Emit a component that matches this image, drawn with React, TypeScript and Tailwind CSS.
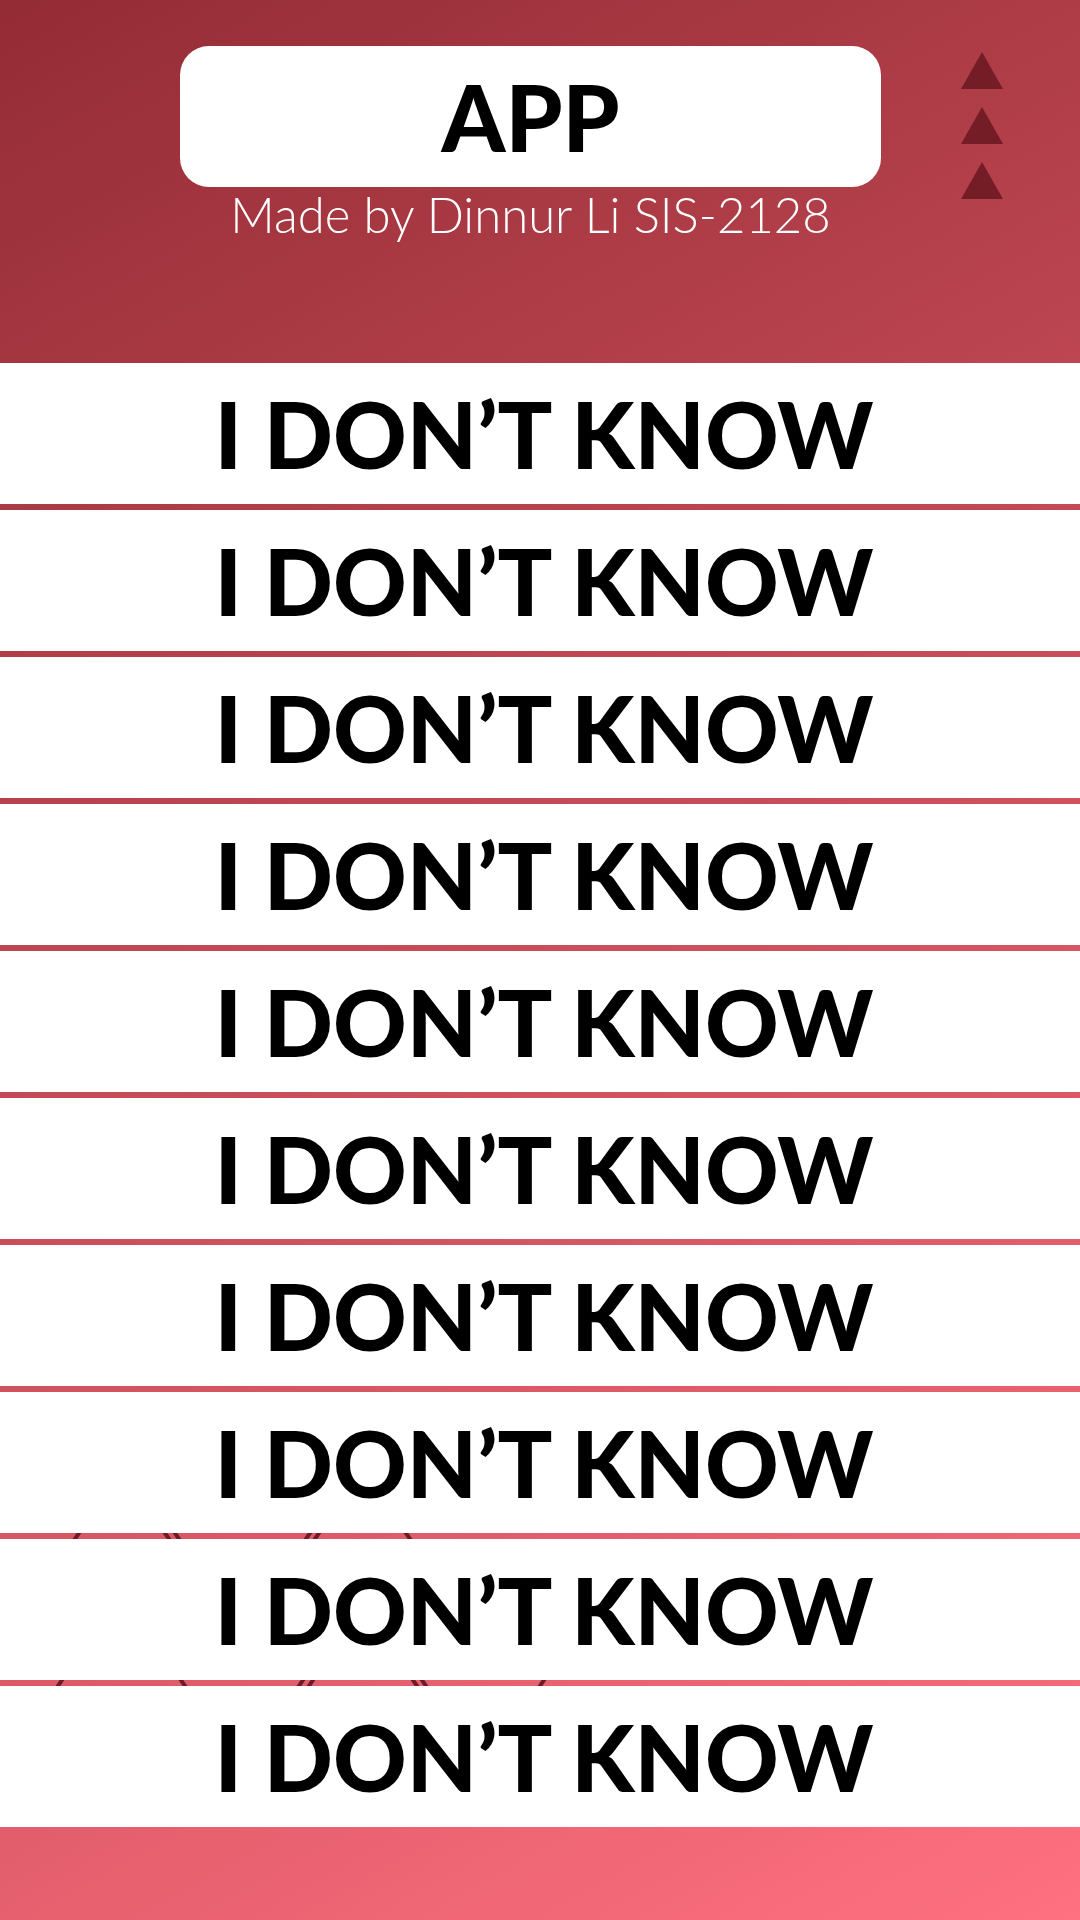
const rows = Array.from({ length: 10 }, (_, i) => i);

const marks = [
  { y: 1533, xs: [[79, 75], [165, 169], [175, 179], [310, 306], [319, 315], [406, 410]] },
  { y: 1680, xs: [[62, 58], [181, 185], [303, 299], [313, 309], [413, 417], [422, 426], [544, 540]] },
];

function Triangle() {
  return (
    <svg viewBox="0 0 42 37" className="h-[37px] w-[42px] fill-[#751d26]" aria-hidden="true">
      <path d="M21 0L42 37H0Z" />
    </svg>
  );
}

function Pattern() {
  return (
    <svg
      viewBox="0 0 600 1920"
      className="pointer-events-none absolute top-0 left-0 h-[1920px] w-[600px] stroke-[#6f1a24]"
      strokeWidth="4"
      aria-hidden="true"
    >
      {marks.map((m) =>
        m.xs.map(([a, b]) => <path key={`${m.y}-${a}`} d={`M${a} ${m.y}L${b} ${m.y + 6}`} strokeLinecap="square" />)
      )}
    </svg>
  );
}

export default function App() {
  return (
    <div className="relative min-h-screen bg-[linear-gradient(151deg,#942c35_0%,#ff7080_100%)] pb-[93px] font-['Lato',sans-serif]">
      <Pattern />
      <header className="relative grid h-[363px] grid-cols-[1fr_65%_1fr] items-start">
        <div />
        <div className="-ml-[9px] mr-[10px] flex flex-col pt-[46px] text-center">
          <h1 className="rounded-[29px] bg-white text-[91px] leading-[141px] font-black text-black">APP</h1>
          <p className="text-[49px] leading-[54px] font-light whitespace-nowrap text-white">Made by Dinnur Li SIS-2128</p>
        </div>
        <button type="button" aria-label="Menu" className="flex flex-col gap-[18px] justify-self-end pt-[52px] pr-[77px]">
          <Triangle />
          <Triangle />
          <Triangle />
        </button>
      </header>
      <main className="relative flex flex-col gap-1.5">
        {rows.map((i) => (
          <button
            key={i}
            type="button"
            className="w-full bg-white pl-2 text-center text-[91px] leading-[141px] font-black text-black"
          >
            I DON’T KNOW
          </button>
        ))}
      </main>
    </div>
  );
}
